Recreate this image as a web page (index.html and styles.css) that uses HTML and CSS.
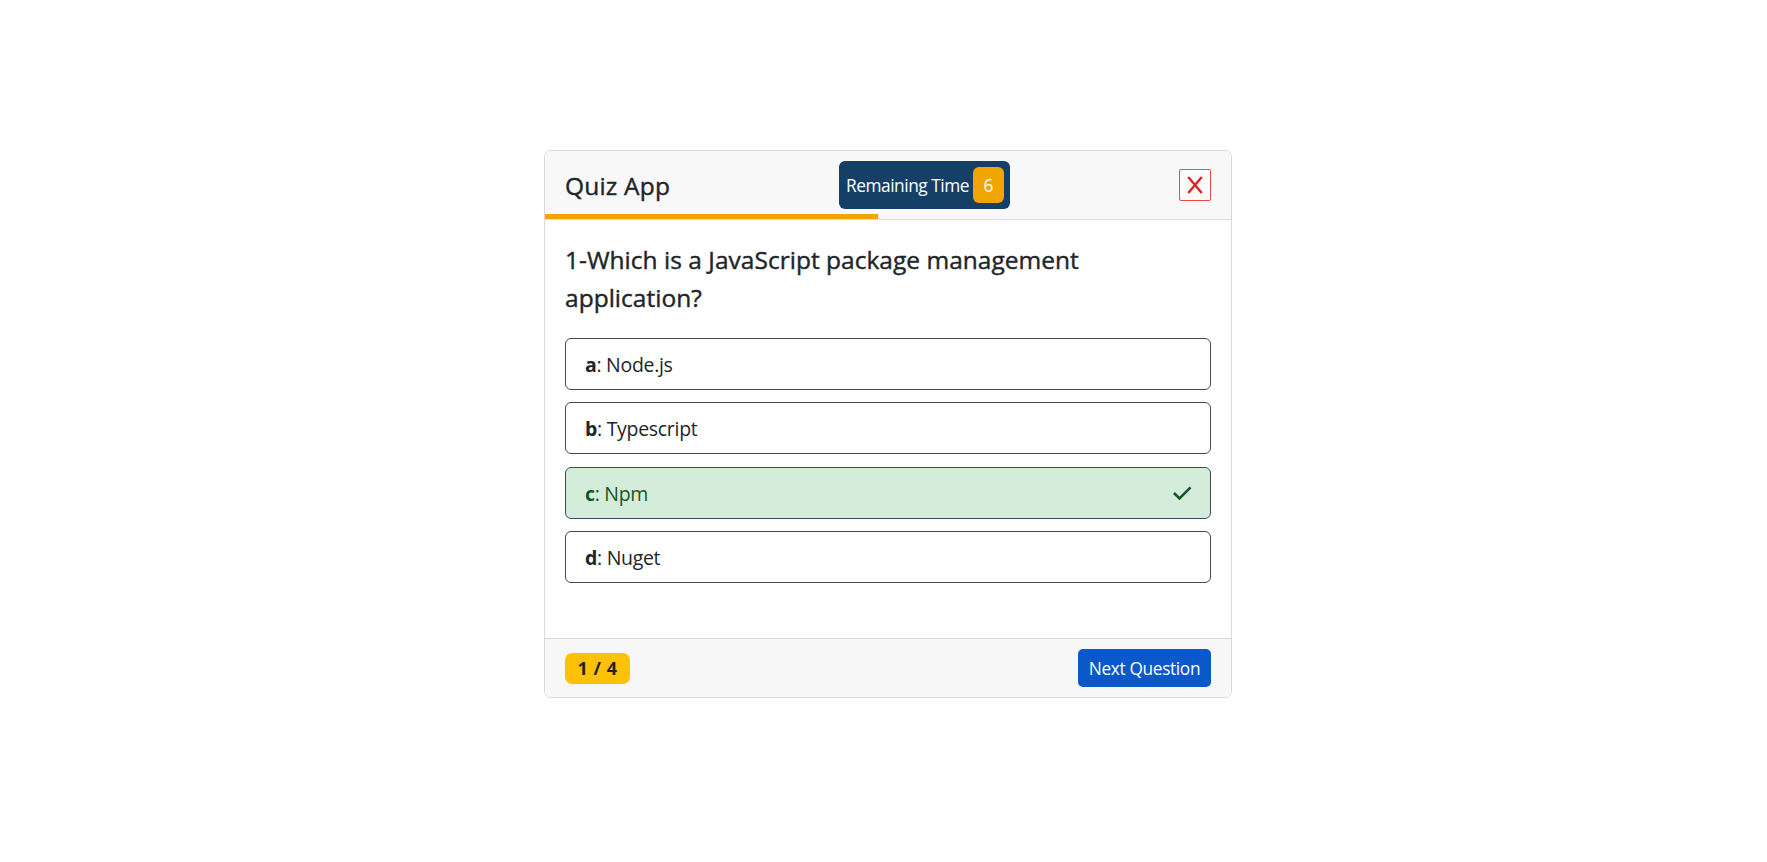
FILE: index.html
```html
<!DOCTYPE html>
<html lang="en">
<head>
<meta charset="utf-8">
<title>Quiz App</title>
<link rel="stylesheet" href="styles.css">
</head>
<body>
<main class="card">
  <header class="card-header">
    <h1 class="title">Quiz App</h1>
    <div class="timer"><span class="timer-label">Remaining Time</span><span class="seconds">6</span></div>
    <button class="close" aria-label="Close"><svg width="16" height="18" viewBox="0 0 16 18"><path d="M1.2 1 14.8 17M14.8 1 1.2 17"/></svg></button>
  </header>
  <div class="progress"><div class="progress-bar"></div></div>
  <section class="card-body">
    <h2 class="question"><span class="line">1-Which is a JavaScript package management</span> <span class="line">application?</span></h2>
    <div class="options">
      <div class="option"><span><b>a</b>: Node.js</span></div>
      <div class="option"><span><b>b</b>: Typescript</span></div>
      <div class="option correct"><span><b>c</b>: Npm</span><svg class="check" width="20" height="16" viewBox="0 0 20 16"><path d="M2 8 7.5 13.5 18.5 2.3"/></svg></div>
      <div class="option"><span><b>d</b>: Nuget</span></div>
    </div>
  </section>
  <footer class="card-footer">
    <span class="counter">1 / 4</span>
    <button class="next">Next Question</button>
  </footer>
</main>
</body>
</html>
```
FILE: styles.css
```css
* { box-sizing: border-box; }
body {
  margin: 0;
  height: 862px;
  padding-top: 150px;
  background: #fff;
  color: #212529;
  font-family: "Open Sans", "Noto Sans", sans-serif;
}
button { font: inherit; margin: 0; padding: 0; }
.card {
  width: 688px;
  height: 548px;
  margin-left: 544px;
  display: flex;
  flex-direction: column;
  border: 1px solid #d9d9d9;
  border-radius: 7px;
  overflow: hidden;
}
.card-header {
  height: 63px;
  padding: 0 20px;
  display: flex;
  align-items: center;
  background: #f8f8f8;
}
.title {
  width: 105px;
  margin: 6px 0 0;
  font-size: 24.5px;
  line-height: 34px;
  font-weight: 500;
  letter-spacing: 0.2px;
  white-space: nowrap;
  -webkit-text-stroke: 0.4px #212529;
}
.timer {
  width: 171px;
  height: 48px;
  margin: 5px 0 0 169px;
  padding: 0 6px 0 7px;
  display: flex;
  align-items: center;
  justify-content: space-between;
  border-radius: 6px;
  background: #153f67;
  color: #fff;
  font-size: 17.3px;
  white-space: nowrap;
}
.timer-label { letter-spacing: -0.45px; }
.seconds {
  width: 31px;
  height: 36px;
  border-radius: 6px;
  background: #f1a500;
  line-height: 37px;
  text-align: center;
}
.close {
  width: 32px;
  height: 32px;
  margin: 5px 0 0 auto;
  display: flex;
  align-items: center;
  justify-content: center;
  border: 1px solid #f04848;
  border-radius: 2px;
  background: #fbfbfb;
}
.close path { fill: none; stroke: #e61e25; stroke-width: 2.4; }
.progress { height: 6px; background: #f8f8f8; border-bottom: 1px solid #dcdcdc; }
.progress-bar { width: 333px; height: 5px; background: #f1a500; }
.card-body { flex: 1; padding: 21px 20px 0; }
.question {
  margin: 0 0 21px;
  font-size: 24.5px;
  line-height: 38px;
  font-weight: 500;
  -webkit-text-stroke: 0.4px #212529;
}
.line { display: block; white-space: nowrap; letter-spacing: 0.02px; }
.options { display: grid; gap: 12px; }
.option {
  height: 52px;
  padding: 0 18px 0 19px;
  display: flex;
  align-items: center;
  justify-content: space-between;
  border: 1px solid #41465e;
  border-radius: 6px;
  font-size: 19.5px;
  letter-spacing: -0.3px;
}
.option:nth-child(3) { margin-top: 1px; }
.correct { background: #d4edda; color: #155724; }
.check path { fill: none; stroke: #155724; stroke-width: 2.6; }
.card-footer {
  height: 59px;
  padding: 0 20px;
  display: flex;
  align-items: center;
  justify-content: space-between;
  border-top: 1px solid #d9d9d9;
  background: #f7f7f7;
}
.counter {
  width: 65px;
  height: 31px;
  border-radius: 7px;
  background: #ffc107;
  font-size: 18px;
  line-height: 31px;
  font-weight: 700;
  letter-spacing: 0.5px;
  text-align: center;
}
.next {
  width: 133px;
  height: 38px;
  border: 0;
  border-radius: 5px;
  background: #0a58ca;
  color: #fff;
  font-size: 17.3px;
  letter-spacing: -0.35px;
}
```
